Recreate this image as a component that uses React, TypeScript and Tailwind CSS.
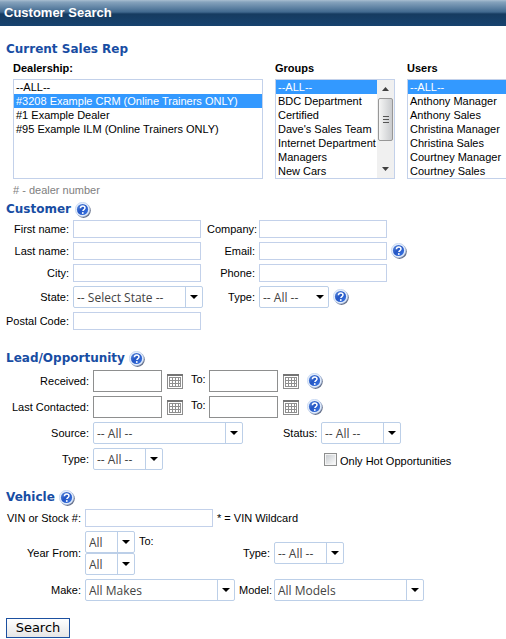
import type { ReactNode } from "react";

const bodyFont = "font-['Liberation_Sans',Arial,sans-serif]";

function HelpButton({ topic }: { topic: string }) {
  return (
    <button type="button" aria-label={`Help: ${topic}`} className="block size-4 shrink-0 cursor-pointer">
      <svg viewBox="0 0 16 16" className="size-4" aria-hidden="true">
        <defs>
          <linearGradient id="helpFill" x1="0" y1="0" x2="1" y2="1">
            <stop offset="0" stopColor="#5f8fe0" />
            <stop offset="0.45" stopColor="#2456c4" />
            <stop offset="1" stopColor="#3d78e6" />
          </linearGradient>
        </defs>
        <circle cx="8.5" cy="8.6" r="7.3" fill="#66718a" />
        <circle cx="7.5" cy="7.5" r="7.2" fill="#e3edfb" stroke="#b9cdee" strokeWidth="0.6" />
        <circle cx="7.5" cy="7.5" r="5.6" fill="url(#helpFill)" />
        <path d="M5.4 6.2c0-1.4 1-2.2 2.3-2.2s2.300.8 2.300 2c0 1.500-2.100 1.600-2.100 3" fill="none" stroke="#fff" strokeWidth="1.5" />
        <circle cx="7.8" cy="11" r="0.9" fill="#fff" />
      </svg>
    </button>
  );
}

function CalendarButton({ label }: { label: string }) {
  return (
    <button type="button" aria-label={label} className="block size-4 shrink-0 cursor-pointer">
      <svg viewBox="0 0 16 16" className="size-4" aria-hidden="true" shapeRendering="crispEdges">
        <rect x="0.5" y="1.5" width="15" height="14" fill="#fff" stroke="#8c8c8c" />
        <rect x="0" y="1" width="16" height="2" fill="#757575" />
        <rect x="2" y="4" width="12" height="10" fill="#8f8f8f" />
        {[4, 7, 10].flatMap((y) =>
          [3, 6, 9, 12].map((x) => (
            <rect key={`${x}-${y}`} x={x} y={y + 1} width={x === 12 ? 1 : 2} height="2" fill="#fff" />
          )),
        )}
      </svg>
    </button>
  );
}

function Heading({ children, help }: { children: ReactNode; help?: string }) {
  return (
    <div className="flex h-5 items-center gap-1">
      <h2 className="font-['DejaVu_Sans',Verdana,sans-serif] text-xs leading-5 font-bold text-[#184da3]">{children}</h2>
      {help && (
        <div className="pt-0.5">
          <HelpButton topic={help} />
        </div>
      )}
    </div>
  );
}

function Label({ htmlFor, children }: { htmlFor: string; children: ReactNode }) {
  return (
    <label htmlFor={htmlFor} className="text-right whitespace-nowrap">
      {children}
    </label>
  );
}

function TextField({ id }: { id: string }) {
  return <input id={id} type="text" className="h-[18px] w-32 shrink-0 border border-[#c3d1ea] bg-white px-1 outline-none" />;
}

function DateField({ id, label }: { id: string; label?: string }) {
  return (
    <input
      id={id}
      type="text"
      aria-label={label}
      className="h-[22px] w-[69px] shrink-0 border border-[#8e8f8f] bg-white px-1 outline-none"
    />
  );
}

function Combo({ id, value, width, divider = true }: { id: string; value: string; width: string; divider?: boolean }) {
  return (
    <div className={`relative h-[22px] shrink-0 rounded-xs border border-[#bccfe8] bg-white ${width}`}>
      <select
        id={id}
        className="block size-full appearance-none truncate bg-transparent pt-px pl-[3px] font-['Open_Sans',sans-serif] text-xs text-[#444] outline-none"
      >
        <option>{value}</option>
      </select>
      <span
        aria-hidden="true"
        className={`pointer-events-none absolute inset-y-0 right-0 flex w-[17px] items-center justify-center ${divider ? "border-l border-[#bccfe8]" : ""}`}
      >
        <svg viewBox="0 0 8 4" className="h-1 w-2">
          <path d="M0 0h8L4 4z" fill="#000" />
        </svg>
      </span>
    </div>
  );
}

function ScrollRail() {
  return (
    <div aria-hidden="true" className="flex w-[17px] shrink-0 flex-col items-center bg-[#f0f0f0]">
      <svg viewBox="0 0 7 18" className="h-[18px] w-[7px]">
        <path d="M0 11l3.500-4 3.500 4z" fill="#404040" />
      </svg>
      <div className="flex h-[43px] w-[15px] flex-col items-center justify-center gap-0.5 rounded-xs border border-[#979797] bg-linear-to-r from-[#f5f5f5] to-[#c9cbce]">
        <span className="h-px w-1.5 bg-[#555]" />
        <span className="h-px w-1.5 bg-[#555]" />
        <span className="h-px w-1.5 bg-[#555]" />
      </div>
      <svg viewBox="0 0 7 18" className="mt-auto h-[18px] w-[7px]">
        <path d="M0 7l3.500 4 3.500-4z" fill="#404040" />
      </svg>
    </div>
  );
}

interface ListBoxProps {
  id: string;
  label: string;
  options: string[];
  selected: string;
  width: string;
  scroll?: boolean;
}

function ListBox({ id, label, options, selected, width, scroll = false }: ListBoxProps) {
  return (
    <div className={`shrink-0 ${width}`}>
      <label htmlFor={id} className="block h-5 leading-[18px] font-bold">
        {label}
      </label>
      <div className="flex h-[100px] border border-[#c3d1ea] bg-white">
        <select
          id={id}
          multiple
          defaultValue={[selected]}
          className="h-full min-w-0 flex-1 overflow-hidden outline-none"
        >
          {options.map((option) => (
            <option
              key={option}
              className="h-3.5 min-h-0 p-0 px-0.5 pt-px leading-[14px] text-black checked:bg-[linear-gradient(#3399ff,#3399ff)] checked:text-white"
            >
              {option}
            </option>
          ))}
        </select>
        {scroll && <ScrollRail />}
      </div>
    </div>
  );
}

const dealerships = [
  "--ALL--",
  "#3208 Example CRM (Online Trainers ONLY)",
  "#1 Example Dealer",
  "#95 Example ILM (Online Trainers ONLY)",
];
const groups = ["--ALL--", "BDC Department", "Certified", "Dave's Sales Team", "Internet Department", "Managers", "New Cars"];
const users = [
  "--ALL--",
  "Anthony Manager",
  "Anthony Sales",
  "Christina Manager",
  "Christina Sales",
  "Courtney Manager",
  "Courtney Sales",
];

function DateRange({ id, name }: { id: string; name: string }) {
  return (
    <div className="col-span-3 flex items-center">
      <DateField id={id} />
      <div className="ml-[5px] flex items-center gap-2">
        <CalendarButton label={`Pick ${name} start date`} />
        <label htmlFor={`${id}-to`} className="w-[18px] pb-1">
          To:
        </label>
      </div>
      <DateField id={`${id}-to`} />
      <div className="ml-[5px] flex items-center gap-2">
        <CalendarButton label={`Pick ${name} end date`} />
        <HelpButton topic={name} />
      </div>
    </div>
  );
}

export default function App() {
  return (
    <div className={`overflow-hidden bg-white text-[11px] leading-[14px] text-black ${bodyFont}`}>
      <header className="flex h-[26px] items-center bg-[linear-gradient(#a9bed1_0,#86a3bd_2px,#41698f_12px,#163b60_14px,#17436f_26px)] px-1">
        <h1 className="text-[13px] leading-[26px] font-bold text-white">Customer Search</h1>
      </header>

      <form className="px-1.5 pt-[13px]" onSubmit={(event) => event.preventDefault()}>
        <section>
          <Heading>Current Sales Rep</Heading>
          <div className="flex gap-3 pl-[7px]">
            <ListBox
              id="dealership"
              label="Dealership:"
              options={dealerships}
              selected={dealerships[1]}
              width="w-[250px]"
            />
            <ListBox id="groups" label="Groups" options={groups} selected="--ALL--" width="w-[120px]" scroll />
            <ListBox id="users" label="Users" options={users} selected="--ALL--" width="w-[120px]" />
          </div>
          <p className="h-5 pl-[7px] leading-[22px] text-[#808080]"># - dealer number</p>
        </section>

        <section>
          <Heading help="Customer">Customer</Heading>
          <div className="mt-px grid grid-cols-[63px_130px_48px_1fr] items-center gap-1">
            <Label htmlFor="first-name">First name:</Label>
            <TextField id="first-name" />
            <Label htmlFor="company">Company:</Label>
            <TextField id="company" />

            <Label htmlFor="last-name">Last name:</Label>
            <TextField id="last-name" />
            <Label htmlFor="email">Email:</Label>
            <div className="flex h-[18px] items-center gap-1">
              <TextField id="email" />
              <HelpButton topic="Email" />
            </div>

            <Label htmlFor="city">City:</Label>
            <TextField id="city" />
            <Label htmlFor="phone">Phone:</Label>
            <TextField id="phone" />

            <Label htmlFor="state">State:</Label>
            <Combo id="state" value="-- Select State --" width="w-[130px]" />
            <Label htmlFor="customer-type">Type:</Label>
            <div className="flex items-center gap-1">
              <Combo id="customer-type" value="-- All --" width="w-[70px]" divider={false} />
              <HelpButton topic="Customer type" />
            </div>

            <Label htmlFor="postal-code">Postal Code:</Label>
            <TextField id="postal-code" />
          </div>
        </section>

        <section className="mt-[18px]">
          <Heading help="Lead/Opportunity">Lead/Opportunity</Heading>
          <div className="mt-0.5 grid grid-cols-[83px_186px_34px_1fr] items-center gap-1">
            <Label htmlFor="received">Received:</Label>
            <DateRange id="received" name="Received" />

            <Label htmlFor="contacted">Last Contacted:</Label>
            <DateRange id="contacted" name="Last Contacted" />

            <Label htmlFor="source">Source:</Label>
            <Combo id="source" value="-- All --" width="w-[150px]" />
            <Label htmlFor="status">Status:</Label>
            <Combo id="status" value="-- All --" width="w-20" />

            <Label htmlFor="lead-type">Type:</Label>
            <Combo id="lead-type" value="-- All --" width="w-[70px]" />
            <label className="col-start-4 flex items-center gap-[3px] pl-[3px] whitespace-nowrap">
              <input
                type="checkbox"
                className="size-[13px] appearance-none border border-[#8e8f8f] bg-linear-to-br from-[#c4c8cc] to-white shadow-[inset_0_0_0_1px_#f4f4f4] checked:bg-[#3399ff]"
              />
              <span className="pt-1">Only Hot Opportunities</span>
            </label>
          </div>
        </section>

        <section className="mt-[17px]">
          <Heading help="Vehicle">Vehicle</Heading>
          <div className="mt-0.5 grid grid-cols-[75px_150px_31px_1fr] items-center gap-1">
            <Label htmlFor="vin">VIN or Stock #:</Label>
            <div className="col-span-3 flex items-center gap-1">
              <TextField id="vin" />
              <span>* = VIN Wildcard</span>
            </div>

            <Label htmlFor="year-from">Year From:</Label>
            <div className="flex flex-col">
              <div className="flex gap-1">
                <Combo id="year-from" value="All" width="w-[50px]" />
                <label htmlFor="year-to" className="pt-[3px]">
                  To:
                </label>
              </div>
              <Combo id="year-to" value="All" width="w-[50px]" />
            </div>
            <Label htmlFor="vehicle-type">Type:</Label>
            <Combo id="vehicle-type" value="-- All --" width="w-[70px]" />

            <Label htmlFor="make">Make:</Label>
            <Combo id="make" value="All Makes" width="w-[150px]" />
            <Label htmlFor="model">Model:</Label>
            <Combo id="model" value="All Models" width="w-[150px]" />
          </div>
        </section>

        <button
          type="submit"
          className="mt-[17px] block h-5 w-16 cursor-pointer border border-[#1c50a0] bg-linear-to-b from-white to-[#e6e6e6] font-['DejaVu_Sans',Verdana,sans-serif] text-[13px] leading-[18px]"
        >
          Search
        </button>
      </form>
    </div>
  );
}
